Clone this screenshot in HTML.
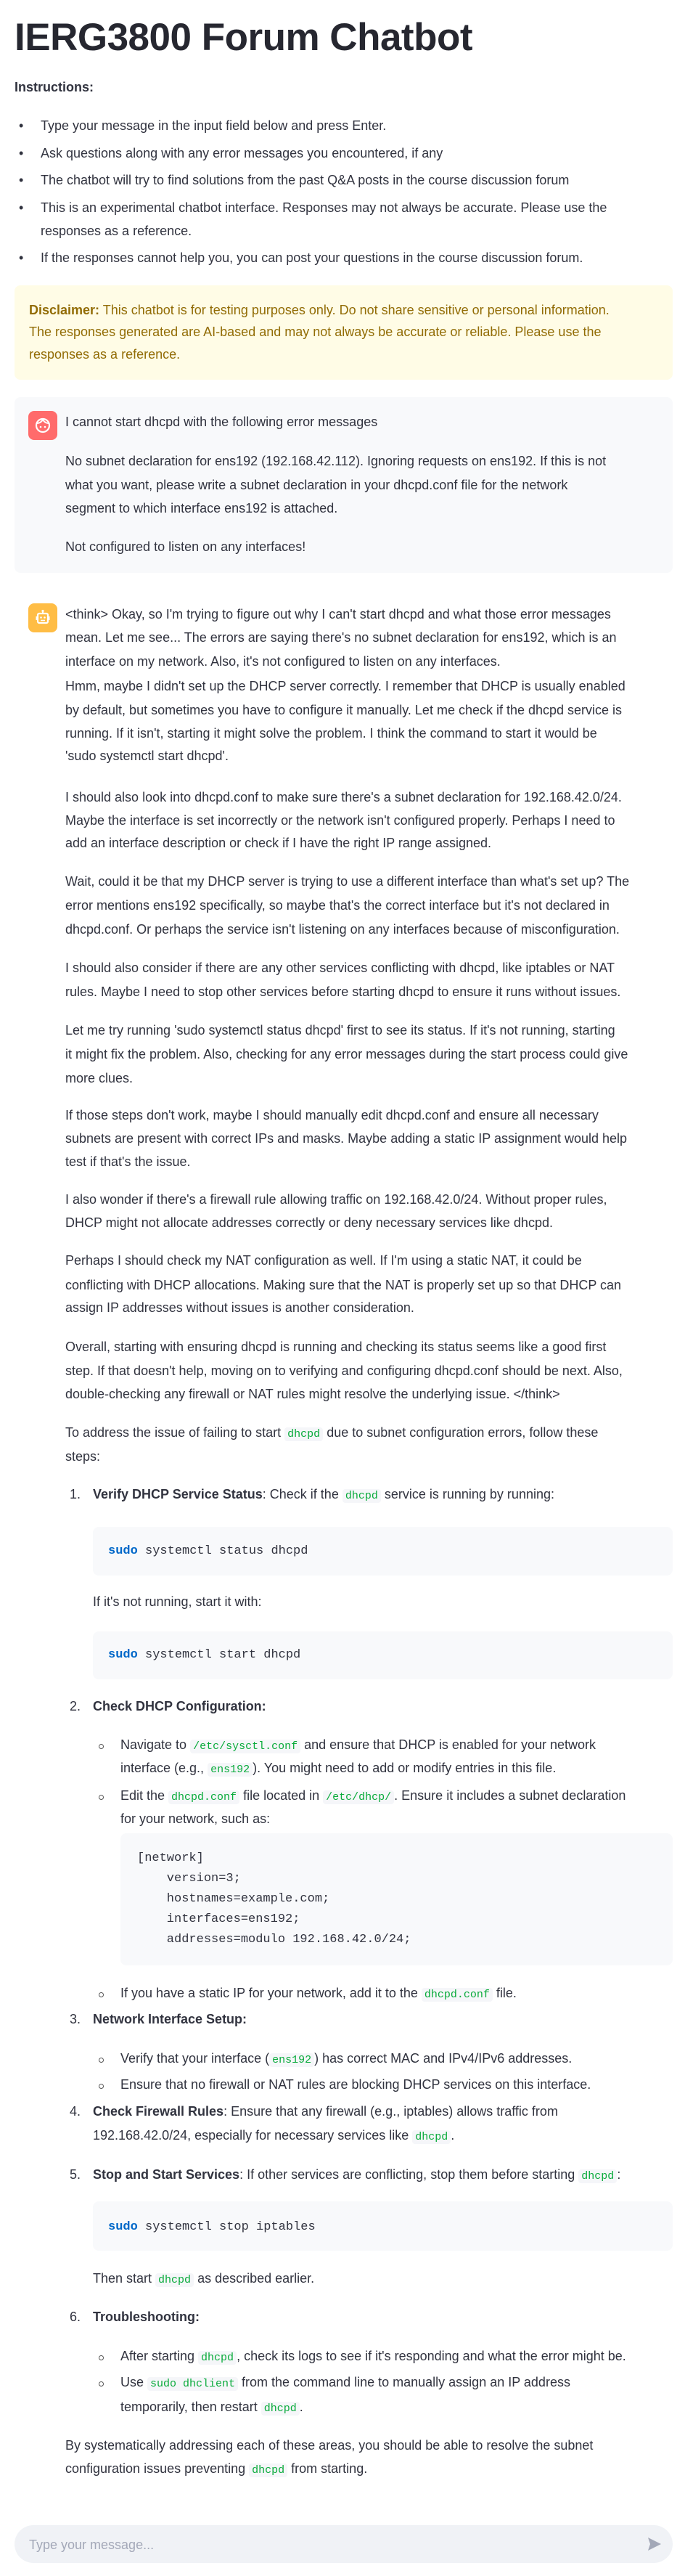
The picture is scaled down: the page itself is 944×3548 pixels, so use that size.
<!DOCTYPE html>
<html><head><meta charset="utf-8">
<style>
*{margin:0;padding:0;box-sizing:border-box}
body{width:944px;height:3548px;background:#fff;position:relative;overflow:hidden;font-family:"Liberation Sans",sans-serif;color:#31333f}
.t{position:absolute;white-space:nowrap;font-size:18px;line-height:33px;height:33px}
.c{font-family:"Liberation Mono",monospace;font-size:15px;color:#09ab3b;background:#f5f6f9;padding:1px 4px;border-radius:4px}
.m{position:absolute;white-space:pre;font-family:"Liberation Mono",monospace;font-size:17px;line-height:28px;color:#31333f}
.s{color:#0068c9;font-weight:bold}
.box{position:absolute;border-radius:8px}
.b{font-weight:bold}
.circ{position:absolute;width:7px;height:7px;border:1px solid #555;border-radius:50%}
</style></head><body>

<div style="position:absolute;left:20px;top:22px;font-size:53px;line-height:60px;font-weight:bold;color:#262730;white-space:nowrap;letter-spacing:-0.5px">IERG3800 Forum Chatbot</div>

<div class="t b" style="left:20px;top:104px">Instructions:</div>
<div class="t" style="left:26px;top:157px">•</div><div class="t" style="left:56px;top:157px">Type your message in the input field below and press Enter.</div>
<div class="t" style="left:26px;top:195px">•</div><div class="t" style="left:56px;top:195px">Ask questions along with any error messages you encountered, if any</div>
<div class="t" style="left:26px;top:232px">•</div><div class="t" style="left:56px;top:232px">The chatbot will try to find solutions from the past Q&amp;A posts in the course discussion forum</div>
<div class="t" style="left:26px;top:270px">•</div><div class="t" style="left:56px;top:270px">This is an experimental chatbot interface. Responses may not always be accurate. Please use the</div>
<div class="t" style="left:56px;top:302px">responses as a reference.</div>
<div class="t" style="left:26px;top:339px">•</div><div class="t" style="left:56px;top:339px">If the responses cannot help you, you can post your questions in the course discussion forum.</div>

<div class="box" style="left:20px;top:393px;width:907px;height:130px;background:#fffce6"></div>
<div class="t" style="left:40px;top:411px;color:#926c05"><b>Disclaimer:</b> This chatbot is for testing purposes only. Do not share sensitive or personal information.</div>
<div class="t" style="left:40px;top:441px;color:#926c05">The responses generated are AI-based and may not always be accurate or reliable. Please use the</div>
<div class="t" style="left:40px;top:472px;color:#926c05">responses as a reference.</div>

<div class="box" style="left:20px;top:547px;width:907px;height:242px;background:#f8f9fb"></div>
<div class="box" style="left:39px;top:566px;width:40px;height:40px;background:#ff6b6b">
<svg width="40" height="40" viewBox="0 0 40 40"><circle cx="20" cy="20" r="9" fill="none" stroke="#fff" stroke-width="2.2"/><path d="M12 17 Q17 17 20 12 Q23 17 28 17" fill="none" stroke="#fff" stroke-width="2"/><circle cx="17" cy="22" r="1.3" fill="#fff"/><circle cx="23" cy="22" r="1.3" fill="#fff"/></svg></div>
<div class="t" style="left:90px;top:565px">I cannot start dhcpd with the following error messages</div>
<div class="t" style="left:90px;top:619px">No subnet declaration for ens192 (192.168.42.112). Ignoring requests on ens192. If this is not</div>
<div class="t" style="left:90px;top:652px">what you want, please write a subnet declaration in your dhcpd.conf file for the network</div>
<div class="t" style="left:90px;top:684px">segment to which interface ens192 is attached.</div>
<div class="t" style="left:90px;top:737px">Not configured to listen on any interfaces!</div>

<div class="box" style="left:39px;top:831px;width:40px;height:40px;background:#ffbd45">
<svg width="40" height="40" viewBox="0 0 40 40"><line x1="20" y1="11" x2="20" y2="14" stroke="#fff" stroke-width="2"/><circle cx="20" cy="10.5" r="1.6" fill="#fff"/><rect x="13" y="14" width="14" height="13" rx="2" fill="none" stroke="#fff" stroke-width="2.2"/><rect x="10.5" y="18" width="2.5" height="5" fill="#fff"/><rect x="27" y="18" width="2.5" height="5" fill="#fff"/><circle cx="17.5" cy="19.5" r="1.3" fill="#fff"/><circle cx="22.5" cy="19.5" r="1.3" fill="#fff"/><line x1="17" y1="23.5" x2="23" y2="23.5" stroke="#fff" stroke-width="1.6"/></svg></div>

<div class="t" style="left:90px;top:830px">&lt;think&gt; Okay, so I'm trying to figure out why I can't start dhcpd and what those error messages</div>
<div class="t" style="left:90px;top:862px">mean. Let me see... The errors are saying there's no subnet declaration for ens192, which is an</div>
<div class="t" style="left:90px;top:895px">interface on my network. Also, it's not configured to listen on any interfaces.</div>
<div class="t" style="left:90px;top:929px">Hmm, maybe I didn't set up the DHCP server correctly. I remember that DHCP is usually enabled</div>
<div class="t" style="left:90px;top:962px">by default, but sometimes you have to configure it manually. Let me check if the dhcpd service is</div>
<div class="t" style="left:90px;top:994px">running. If it isn't, starting it might solve the problem. I think the command to start it would be</div>
<div class="t" style="left:90px;top:1025px">'sudo systemctl start dhcpd'.</div>

<div class="t" style="left:90px;top:1082px">I should also look into dhcpd.conf to make sure there's a subnet declaration for 192.168.42.0/24.</div>
<div class="t" style="left:90px;top:1114px">Maybe the interface is set incorrectly or the network isn't configured properly. Perhaps I need to</div>
<div class="t" style="left:90px;top:1145px">add an interface description or check if I have the right IP range assigned.</div>

<div class="t" style="left:90px;top:1198px">Wait, could it be that my DHCP server is trying to use a different interface than what's set up? The</div>
<div class="t" style="left:90px;top:1231px">error mentions ens192 specifically, so maybe that's the correct interface but it's not declared in</div>
<div class="t" style="left:90px;top:1264px">dhcpd.conf. Or perhaps the service isn't listening on any interfaces because of misconfiguration.</div>

<div class="t" style="left:90px;top:1317px">I should also consider if there are any other services conflicting with dhcpd, like iptables or NAT</div>
<div class="t" style="left:90px;top:1350px">rules. Maybe I need to stop other services before starting dhcpd to ensure it runs without issues.</div>

<div class="t" style="left:90px;top:1403px">Let me try running 'sudo systemctl status dhcpd' first to see its status. If it's not running, starting</div>
<div class="t" style="left:90px;top:1436px">it might fix the problem. Also, checking for any error messages during the start process could give</div>
<div class="t" style="left:90px;top:1469px">more clues.</div>

<div class="t" style="left:90px;top:1520px">If those steps don't work, maybe I should manually edit dhcpd.conf and ensure all necessary</div>
<div class="t" style="left:90px;top:1552px">subnets are present with correct IPs and masks. Maybe adding a static IP assignment would help</div>
<div class="t" style="left:90px;top:1584px">test if that's the issue.</div>

<div class="t" style="left:90px;top:1636px">I also wonder if there's a firewall rule allowing traffic on 192.168.42.0/24. Without proper rules,</div>
<div class="t" style="left:90px;top:1668px">DHCP might not allocate addresses correctly or deny necessary services like dhcpd.</div>

<div class="t" style="left:90px;top:1720px">Perhaps I should check my NAT configuration as well. If I'm using a static NAT, it could be</div>
<div class="t" style="left:90px;top:1754px">conflicting with DHCP allocations. Making sure that the NAT is properly set up so that DHCP can</div>
<div class="t" style="left:90px;top:1785px">assign IP addresses without issues is another consideration.</div>

<div class="t" style="left:90px;top:1839px">Overall, starting with ensuring dhcpd is running and checking its status seems like a good first</div>
<div class="t" style="left:90px;top:1872px">step. If that doesn't help, moving on to verifying and configuring dhcpd.conf should be next. Also,</div>
<div class="t" style="left:90px;top:1904px">double-checking any firewall or NAT rules might resolve the underlying issue. &lt;/think&gt;</div>

<div class="t" style="left:90px;top:1957px">To address the issue of failing to start <span class="c">dhcpd</span> due to subnet configuration errors, follow these</div>
<div class="t" style="left:90px;top:1990px">steps:</div>

<div class="t" style="left:96px;top:2042px">1.</div>
<div class="t" style="left:128px;top:2042px"><b>Verify DHCP Service Status</b>: Check if the <span class="c">dhcpd</span> service is running by running:</div>
<div class="box" style="left:128px;top:2103px;width:799px;height:67px;background:#f8f9fb"></div>
<div class="m" style="left:149px;top:2123px"><span class="s">sudo</span> systemctl status dhcpd</div>
<div class="t" style="left:128px;top:2190px">If it's not running, start it with:</div>
<div class="box" style="left:128px;top:2247px;width:799px;height:66px;background:#f8f9fb"></div>
<div class="m" style="left:149px;top:2266px"><span class="s">sudo</span> systemctl start dhcpd</div>

<div class="t" style="left:96px;top:2334px">2.</div>
<div class="t b" style="left:128px;top:2334px">Check DHCP Configuration:</div>
<div class="circ" style="left:136px;top:2402px"></div>
<div class="t" style="left:166px;top:2387px">Navigate to <span class="c">/etc/sysctl.conf</span> and ensure that DHCP is enabled for your network</div>
<div class="t" style="left:166px;top:2419px">interface (e.g., <span class="c">ens192</span>). You might need to add or modify entries in this file.</div>
<div class="circ" style="left:136px;top:2472px"></div>
<div class="t" style="left:166px;top:2457px">Edit the <span class="c">dhcpd.conf</span> file located in <span class="c">/etc/dhcp/</span>. Ensure it includes a subnet declaration</div>
<div class="t" style="left:166px;top:2489px">for your network, such as:</div>
<div class="box" style="left:166px;top:2525px;width:761px;height:182px;background:#f8f9fb"></div>
<div class="m" style="left:189px;top:2546px">[network]
    version=3;
    hostnames=example.com;
    interfaces=ens192;
    addresses=modulo 192.168.42.0/24;</div>
<div class="circ" style="left:136px;top:2744px"></div>
<div class="t" style="left:166px;top:2729px">If you have a static IP for your network, add it to the <span class="c">dhcpd.conf</span> file.</div>

<div class="t" style="left:96px;top:2765px">3.</div>
<div class="t b" style="left:128px;top:2765px">Network Interface Setup:</div>
<div class="circ" style="left:136px;top:2834px"></div>
<div class="t" style="left:166px;top:2819px">Verify that your interface (<span class="c">ens192</span>) has correct MAC and IPv4/IPv6 addresses.</div>
<div class="circ" style="left:136px;top:2870px"></div>
<div class="t" style="left:166px;top:2855px">Ensure that no firewall or NAT rules are blocking DHCP services on this interface.</div>

<div class="t" style="left:96px;top:2892px">4.</div>
<div class="t" style="left:128px;top:2892px"><b>Check Firewall Rules</b>: Ensure that any firewall (e.g., iptables) allows traffic from</div>
<div class="t" style="left:128px;top:2925px">192.168.42.0/24, especially for necessary services like <span class="c">dhcpd</span>.</div>

<div class="t" style="left:96px;top:2979px">5.</div>
<div class="t" style="left:128px;top:2979px"><b>Stop and Start Services</b>: If other services are conflicting, stop them before starting <span class="c">dhcpd</span>:</div>
<div class="box" style="left:128px;top:3032px;width:799px;height:68px;background:#f8f9fb"></div>
<div class="m" style="left:149px;top:3054px"><span class="s">sudo</span> systemctl stop iptables</div>
<div class="t" style="left:128px;top:3122px">Then start <span class="c">dhcpd</span> as described earlier.</div>

<div class="t" style="left:96px;top:3175px">6.</div>
<div class="t b" style="left:128px;top:3175px">Troubleshooting:</div>
<div class="circ" style="left:136px;top:3244px"></div>
<div class="t" style="left:166px;top:3229px">After starting <span class="c">dhcpd</span>, check its logs to see if it's responding and what the error might be.</div>
<div class="circ" style="left:136px;top:3280px"></div>
<div class="t" style="left:166px;top:3265px">Use <span class="c">sudo dhclient</span> from the command line to manually assign an IP address</div>
<div class="t" style="left:166px;top:3299px">temporarily, then restart <span class="c">dhcpd</span>.</div>

<div class="t" style="left:90px;top:3352px">By systematically addressing each of these areas, you should be able to resolve the subnet</div>
<div class="t" style="left:90px;top:3384px">configuration issues preventing <span class="c">dhcpd</span> from starting.</div>

<div class="box" style="left:20px;top:3478px;width:907px;height:52px;background:#f0f2f6;border-radius:26px"></div>
<div class="t" style="left:40px;top:3489px;color:#a3a8b8">Type your message...</div>
<svg style="position:absolute;left:890px;top:3492px" width="24" height="24" viewBox="0 0 24 24"><path d="M3 3 L21 12 L3 21 L6 12 Z" fill="#a3a8b8"/></svg>

</body></html>
